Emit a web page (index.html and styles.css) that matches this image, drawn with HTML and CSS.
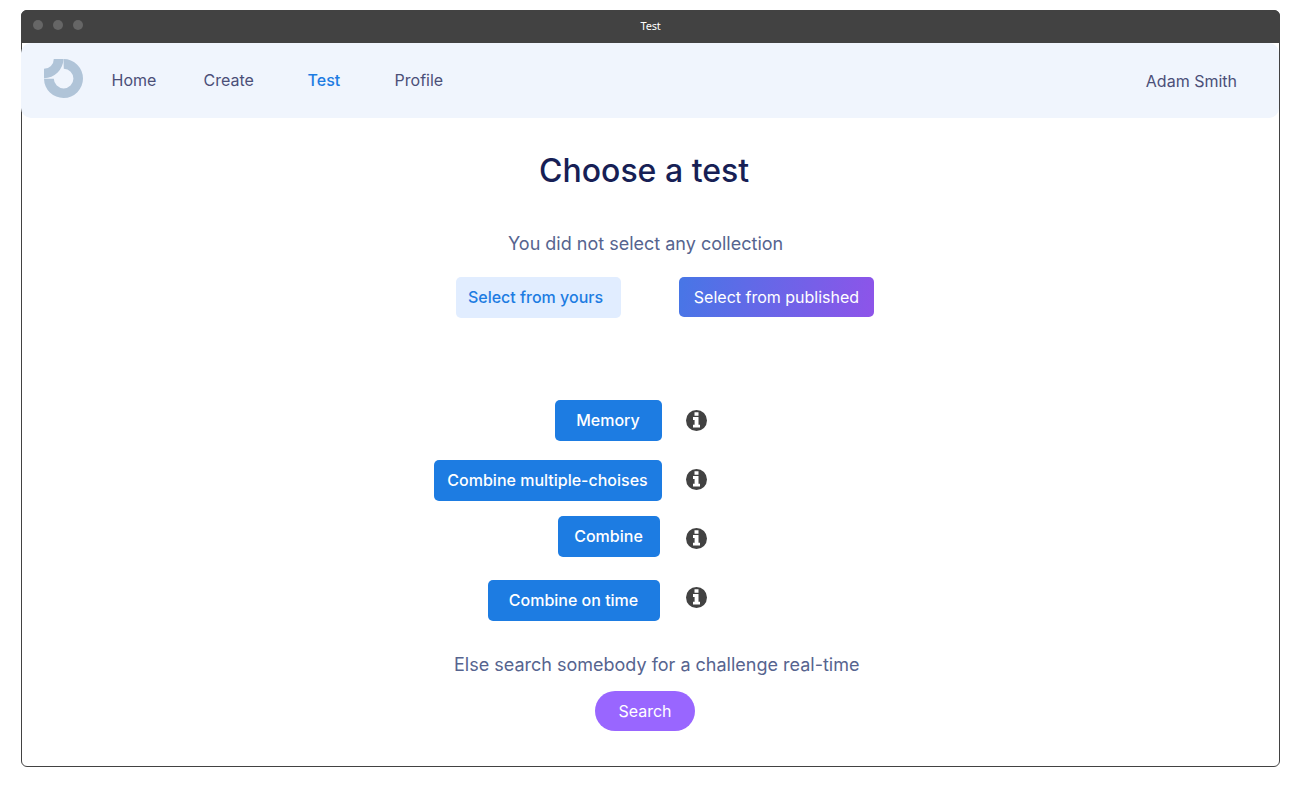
FILE: index.html
```html
<!DOCTYPE html>
<html lang="en">
<head>
<meta charset="utf-8">
<title>Test</title>
<link rel="stylesheet" href="styles.css">
</head>
<body>
<svg class="defs" width="0" height="0" aria-hidden="true">
  <symbol id="info" viewBox="0 0 21 21">
    <circle cx="10.5" cy="10.5" r="10.5" fill="#424242"/>
    <path fill="#fff" d="M8.5 2.3h4v3.4h-4zM7 7.1h5.5v7.6H14v2.9H7v-2.9h1.6V10H7z"/>
  </symbol>
</svg>
<div class="window">
  <div class="titlebar">
    <div class="dots"><i></i><i></i><i></i></div>
    <span class="title">Test</span>
  </div>
  <header class="header">
    <svg class="logo" viewBox="0 0 39 39" width="39" height="39" aria-hidden="true">
      <path fill="#b0c4d8" d="M19.5 0A19.5 19.5 0 1 1 0 19.8H9.8A9.8 9.8 0 1 0 19.8 9.8Z"/>
      <path fill="#b0c4d8" d="M9.8 0H19.4A19.4 19.4 0 0 1 0 19.2V9.8A9.8 9.8 0 0 0 9.8 0Z"/>
    </svg>
    <nav class="nav"><a>Home</a><a>Create</a><a class="active">Test</a><a>Profile</a></nav>
    <span class="user">Adam Smith</span>
  </header>
  <main class="main">
    <h1 class="heading">Choose a test</h1>
    <p class="note note-select">You did not select any collection</p>
    <div class="sources">
      <button class="btn light">Select from yours</button>
      <button class="btn gradient">Select from published</button>
    </div>
    <div class="tests">
      <div class="modes">
        <button class="btn memory">Memory</button>
        <button class="btn multiple">Combine multiple-choises</button>
        <button class="btn combine">Combine</button>
        <button class="btn timed">Combine on time</button>
      </div>
      <div class="infos">
        <svg><use href="#info"/></svg>
        <svg><use href="#info"/></svg>
        <svg><use href="#info"/></svg>
        <svg><use href="#info"/></svg>
      </div>
    </div>
    <p class="note note-search">Else search somebody for a challenge real-time</p>
    <button class="btn search">Search</button>
  </main>
</div>
</body>
</html>
```
FILE: styles.css
```css
* { box-sizing: border-box; }
body {
  margin: 0;
  padding: 10px 0 0 21px;
  background: #fff;
  font-family: Inter, sans-serif;
  font-size: 16px;
}
.defs { position: absolute; }
.window {
  width: 1259px;
  height: 757px;
  border: 1px solid #424242;
  border-radius: 6px;
}
.titlebar {
  display: grid;
  grid-template-columns: 1fr auto 1fr;
  height: 33px;
  margin: -1px -1px 0;
  background: #424242;
  border-radius: 6px 6px 0 0;
}
.dots { display: flex; gap: 10px; padding: 10px 0 0 11.5px; }
.dots i { width: 10px; height: 10px; border-radius: 50%; background: #666; }
.title {
  color: #fff;
  font: 11px/16px "Noto Sans", sans-serif;
  letter-spacing: -0.2px;
  padding-top: 8px;
}
.header {
  display: flex;
  height: 75px;
  margin: 0 0 0 -1px;
  padding: 16px 42px 0 23px;
  border-radius: 10px;
  background: #f0f5fd;
  color: #4b4f78;
}
.logo { flex: none; }
.nav {
  display: grid;
  grid-template-columns: 92px 104px 87px auto;
  margin-left: 28.6px;
  padding-top: 11px;
  line-height: 20px;
}
.nav .active { color: #1d7ce2; font-weight: 500; }
.user { margin-left: auto; padding-top: 12px; line-height: 20px; }
.main { display: flex; flex-direction: column; align-items: flex-start; }
.heading {
  margin: 33px 0 0 517px;
  color: #171f55;
  font-size: 32px;
  font-weight: 500;
  line-height: 40px;
}
.note { margin: 0; color: #56648f; font-size: 18px; line-height: 24px; }
.note-select { margin: 41px 0 0 486px; }
.btn {
  border: 0;
  border-radius: 5px;
  padding: 0 1px 1px 0;
  height: 41px;
  color: #fff;
  background: #1d7ce2;
  font: 500 16px/20px Inter, sans-serif;
  white-space: nowrap;
}
.sources { display: flex; gap: 58px; margin: 21px 0 0 434px; }
.light { width: 165px; padding-right: 6px; background: #e1edff; color: #1d7ce2; }
.gradient { width: 195px; height: 40px; padding: 0; background: linear-gradient(100deg, #4776e6, #8e54e9); font-weight: 400; }
.tests { display: flex; gap: 24px; margin: 82px 0 0 412px; }
.modes { display: flex; flex-direction: column; align-items: flex-end; width: 228px; }
.memory { width: 107px; }
.multiple { width: 228px; margin-top: 19px; }
.combine { width: 102px; margin: 15px 2px 0 0; }
.timed { width: 172px; margin: 23px 2px 0 0; }
.infos { display: flex; flex-direction: column; gap: 38px; padding-top: 10px; }
.infos svg { width: 21px; height: 21px; }
.note-search { margin: 32px 0 0 432px; }
.search { width: 100px; height: 40px; margin: 14px 0 0 573px; padding: 0; border-radius: 20px; background: #9966ff; font-weight: 400; }
```
